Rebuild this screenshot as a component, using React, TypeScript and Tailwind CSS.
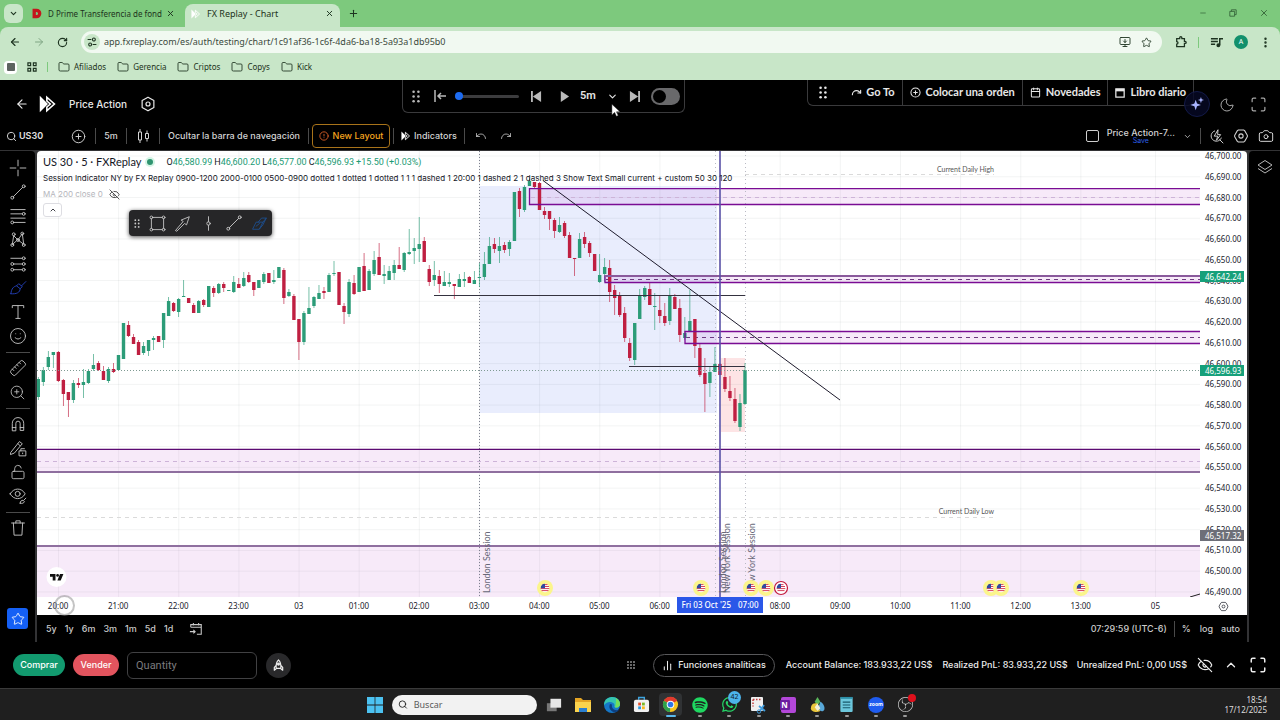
import React, { useState } from 'react';
import {
  ArrowLeft,
  ArrowRight,
  BarChart2,
  Calendar,
  ChevronDown,
  ChevronUp,
  CirclePlus,
  EyeOff,
  Folder,
  LockOpen,
  Maximize,
  Minus,
  Moon,
  Plus,
  Redo,
  RotateCw,
  Ruler,
  Search,
  Smile,
  Star,
  Trash2,
  Undo,
  X,
  ZoomIn,
  Camera,
  MonitorDown,
  EllipsisVertical,
  CircleAlert,
} from 'lucide-react';
import { FaSpotify, FaWhatsapp } from 'react-icons/fa';
import { SiObsstudio } from 'react-icons/si';

// x of the first candle and the distance between two candles
const FIRST_X = 38.3;
const STEP = 5.012;

// [up ? 1 : 0, high, bodyTop, bodyBottom, low]
const candles: number[][] = [
  [1, 377, 379, 397, 400], [1, 367, 370, 382, 386], [1, 351, 357, 367, 370], [1, 352, 352, 355, 368],
  [0, 351, 352, 381, 382], [0, 379, 380, 394, 406], [0, 392, 392, 400, 417], [1, 380, 383, 400, 403],
  [0, 378, 383, 385, 388], [1, 369, 382, 385, 398], [1, 369, 371, 383, 384], [1, 354, 365, 369, 371],
  [0, 361, 363, 370, 371], [0, 366, 371, 380, 380], [1, 367, 369, 381, 383], [0, 363, 369, 372, 373],
  [1, 355, 355, 370, 370], [1, 323, 323, 359, 359], [0, 321, 325, 336, 337], [0, 334, 337, 344, 344],
  [0, 340, 342, 355, 355], [1, 342, 346, 353, 355], [1, 340, 340, 351, 356], [1, 336, 338, 340, 350],
  [0, 336, 336, 342, 342], [1, 313, 313, 340, 348], [1, 297, 301, 316, 316], [0, 302, 303, 311, 312],
  [1, 298, 299, 312, 317], [1, 280, 296, 297, 297], [0, 298, 298, 303, 303], [0, 303, 305, 313, 313],
  [1, 300, 301, 313, 313], [0, 299, 300, 305, 307], [1, 286, 286, 307, 307], [0, 286, 288, 293, 297],
  [1, 283, 284, 293, 294], [0, 282, 284, 288, 292], [1, 290, 290, 291, 291], [1, 276, 282, 292, 293],
  [0, 278, 284, 288, 288], [1, 272, 278, 286, 287], [0, 272, 275, 282, 283], [0, 282, 282, 290, 296],
  [1, 280, 280, 288, 288], [1, 272, 274, 282, 284], [0, 273, 273, 283, 283], [1, 270, 280, 282, 284],
  [1, 267, 267, 278, 278], [0, 268, 270, 298, 304], [1, 289, 292, 296, 297], [0, 294, 296, 320, 320],
  [0, 319, 319, 342, 360], [1, 311, 313, 342, 345], [1, 287, 308, 314, 314], [1, 296, 297, 306, 308],
  [1, 285, 293, 299, 299], [0, 287, 291, 293, 299], [1, 273, 275, 292, 292], [1, 261, 273, 274, 276],
  [0, 272, 272, 305, 305], [0, 303, 306, 312, 324], [1, 279, 282, 314, 317], [0, 275, 283, 294, 295],
  [1, 267, 267, 292, 292], [0, 253, 266, 291, 291], [1, 269, 271, 290, 290], [1, 251, 260, 274, 276],
  [0, 243, 257, 275, 275], [1, 265, 274, 276, 284], [1, 266, 271, 280, 280], [1, 260, 265, 273, 280],
  [0, 247, 265, 269, 269], [1, 252, 253, 270, 272], [1, 229, 252, 254, 255], [1, 238, 248, 251, 264],
  [1, 217, 244, 249, 262], [0, 237, 241, 262, 262], [0, 265, 269, 282, 286], [1, 261, 275, 280, 286],
  [0, 270, 276, 284, 293], [1, 271, 282, 286, 286], [1, 273, 282, 284, 287], [0, 284, 284, 286, 299],
  [1, 274, 279, 287, 287], [1, 272, 279, 281, 287], [0, 276, 277, 283, 283], [1, 271, 280, 284, 284],
  [1, 263, 277, 278, 287], [1, 252, 264, 277, 280], [1, 237, 246, 264, 264], [0, 238, 244, 249, 253],
  [1, 237, 246, 251, 263], [0, 242, 245, 250, 253], [1, 240, 242, 249, 256], [1, 192, 192, 241, 241],
  [0, 188, 191, 209, 217], [1, 185, 187, 210, 212], [1, 178, 181, 186, 186], [0, 182, 182, 187, 189],
  [0, 182, 183, 210, 210], [0, 207, 211, 215, 219], [0, 211, 211, 219, 230], [0, 218, 220, 231, 238],
  [1, 217, 225, 232, 233], [0, 221, 223, 236, 238], [0, 232, 235, 258, 258], [0, 258, 258, 259, 276],
  [1, 233, 239, 258, 258], [0, 232, 237, 244, 248], [0, 241, 243, 253, 257], [0, 254, 254, 271, 271],
  [1, 254, 275, 282, 283], [1, 258, 267, 274, 282], [0, 260, 268, 292, 302], [0, 285, 290, 298, 315],
  [0, 292, 296, 315, 317], [0, 307, 313, 338, 342], [0, 338, 343, 358, 361], [1, 323, 323, 360, 365],
  [1, 289, 296, 319, 319], [1, 286, 288, 297, 300], [0, 282, 289, 305, 305], [1, 293, 306, 307, 330],
  [0, 296, 310, 316, 323], [0, 303, 316, 323, 326], [1, 288, 296, 321, 325], [0, 294, 297, 309, 309],
  [0, 299, 308, 335, 342], [1, 317, 333, 338, 340], [1, 290, 321, 332, 332], [0, 319, 319, 346, 358],
  [0, 344, 348, 375, 377], [0, 358, 373, 384, 412], [1, 367, 372, 383, 397], [1, 347, 364, 372, 372],
  [0, 363, 364, 375, 375], [0, 358, 377, 389, 392], [0, 376, 391, 398, 401], [0, 388, 399, 421, 423],
  [1, 394, 403, 427, 431], [1, 363, 370, 404, 405],
];

// the slot of 07:00 is covered by the crosshair label
const hours = [
  '20:00', '21:00', '22:00', '23:00', '03', '01:00', '02:00', '03:00', '04:00',
  '05:00', '06:00', '', '08:00', '09:00', '10:00', '11:00', '12:00', '13:00',
];

const prices = Array.from({ length: 22 }, (_, i) => 46700 - i * 10);

const flags = [545, 701, 751, 766, 781, 991, 1001, 1081];

const formatPrice = (n: number) => n.toLocaleString('en-US', { minimumFractionDigits: 2 });

const Flag = ({ x, ring }: { x: number; ring?: boolean }) => (
  <g transform={`translate(${x} 588)`}>
    {ring ? (
      <circle r="6.5" fill="#fff" stroke="#c2183c" strokeWidth="1.2" />
    ) : (
      <circle r="8" fill="#fbf58c" />
    )}
    <circle r="4.3" fill="#fff" />
    <path d="M-4 -1.5H4M-4.3 0.6H4.3M-3.5 2.6H3.5M-2.5 -3.4H2.5" stroke="#d8415a" strokeWidth="1" />
    <path d="M0 -4.3A4.3 4.3 0 0 0 -4.3 0.3H0Z" fill="#2f4ba0" />
  </g>
);

const Chart = () => (
  <svg
    viewBox="37 151 1163 446"
    preserveAspectRatio="xMinYMin slice"
    className="block h-full w-full"
    fontFamily="Lato, sans-serif"
  >
    <rect x="480" y="186" width="237" height="227" fill="#e9edfd" />
    <rect x="721" y="358" width="24" height="74" fill="#fde4e5" />
    <g stroke="#1c2030" strokeOpacity="0.05">
      {prices.map((p, i) => (
        <path key={p} d={`M37 ${156 + i * 20.76}H1200`} />
      ))}
      {hours.map((h, i) => (
        <path key={i} d={`M${58.5 + i * 60.14} 151V597`} />
      ))}
      <path d="M1155.5 151V597" />
    </g>

    {/* supply and demand zones */}
    <g fill="#b02fc8" fillOpacity="0.1">
      <rect x="529.5" y="189" width="672" height="16" />
      <rect x="605" y="276" width="596" height="7" />
      <rect x="685" y="331" width="516" height="13" />
      <rect x="37" y="449" width="1163" height="23" />
      <rect x="37" y="546" width="1163" height="51" />
    </g>
    <g stroke="#cdb4d8" strokeDasharray="4 4">
      <path d="M531 197.5H1200M37 461.5H1200" />
      <path d="M745 174.5H994M37 517.5H994" stroke="#dadada" />
    </g>
    <path d="M606 279.5H1200M686 337.5H1200" stroke="#6d3a80" strokeDasharray="4 4" />
    <path d="M479.5 151V597" stroke="#7d8090" strokeDasharray="1 2" />
    <path d="M715.5 151V597M745.5 151V597" stroke="#b9bac4" strokeDasharray="1 3" />

    {candles.map(([up, high, top, bottom, low], i) => {
      const x = FIRST_X + i * STEP;
      const color = up ? '#2c9c78' : '#bf1f41';
      return (
        <g key={i} fill={color}>
          <rect x={x - 0.4} y={high} width="0.8" height={low - high} opacity="0.8" />
          <rect x={x - 1.7} y={top} width="3.4" height={bottom - top} />
        </g>
      );
    })}

    <g fill="none" stroke="#7a0c94" strokeWidth="1.3">
      <path d="M1200 188.7H529.5V204.5H1200" />
      <path d="M1200 276H605V282.5H1200" />
      <path d="M1200 331.5H685V343.5H1200" />
    </g>
    <path d="M605 276H1200" stroke="#8a5a9c" strokeWidth="2" />
    <path d="M37 449.3H1200" stroke="#5b0a72" strokeWidth="1.3" />
    <path d="M37 472H1200M37 546H1200" stroke="#8f6f9f" strokeWidth="1.8" />
    <path d="M434 295.5H745M629 366.5H745" stroke="#34323f" />
    <path d="M543 180.5L840 400" stroke="#1d1a2c" />
    <path d="M37 370.5H1200" stroke="#7f9a92" strokeDasharray="1 2" />
    <path d="M720 151V597" stroke="#5a52a8" strokeWidth="1.6" />
    <path d="M1190 597L1200 594" stroke="#222" />

    <g fontSize="7" fill="#555" textAnchor="end">
      <text x="994" y="172">Current Daily High</text>
      <text x="994" y="514">Current Daily Low</text>
    </g>
    <g fontSize="9" fill="#676878">
      <text transform="translate(490 593) rotate(-90)">London Session</text>
      <text transform="translate(726 593) rotate(-90)">London Session</text>
      <text transform="translate(730 593) rotate(-90)">New York Session</text>
      <text transform="translate(755 593) rotate(-90)">New York Session</text>
    </g>
    {flags.map((x) => (
      <Flag key={x} x={x} ring={x === 781} />
    ))}
    <circle cx="56.5" cy="577" r="10" fill="#fff" />
    <path d="M50 574h5.5v6.5h-2.8v-3.8H50zM60 574h3.4l-2.7 6.5h-3.3z" fill="#111" />
    <circle cx="57.6" cy="575.4" r="1.4" fill="#111" />
  </svg>
);

const Glyph = ({ children, className = 'size-[20px]' }: { children: React.ReactNode; className?: string }) => (
  <svg
    viewBox="0 0 28 28"
    className={className}
    fill="none"
    stroke="currentColor"
    strokeWidth="1.3"
    strokeLinecap="round"
    strokeLinejoin="round"
  >
    {children}
  </svg>
);

const TrendGlyph = () => (
  <Glyph>
    <path d="M7.5 20.5L20.5 7.5" />
    <circle cx="6" cy="22" r="2" />
    <circle cx="22" cy="6" r="2" />
  </Glyph>
);

const Hexagon = ({ className }: { className: string }) => (
  <svg viewBox="0 0 24 24" className={className} fill="none" stroke="currentColor" strokeWidth="1.6">
    <path d="M8 3h8l1.5 1 4 7v2l-4 7-1.5 1H8l-1.5-1-4-7v-2l4-7z" />
    <circle cx="12" cy="12" r="3.2" />
  </svg>
);

const HexagonUp = ({ className }: { className: string }) => (
  <svg viewBox="0 0 24 24" className={className} fill="none" stroke="currentColor" strokeWidth="1.8" strokeLinejoin="round">
    <path d="M12 1.8l8.8 5v10.4l-8.8 5-8.8-5V6.8z" />
    <circle cx="12" cy="12" r="3" />
  </svg>
);

const FxLogo = ({ className }: { className: string }) => (
  <svg viewBox="0 0 24 24" className={className}>
    <path d="M1 1l11 11L1 23z" fill="currentColor" />
    <path d="M10.5 3L20.500 12l-10 9v-5L15 12l-4.500-4z" fill="none" stroke="currentColor" strokeWidth="2.200" />
  </svg>
);

const Dots = ({ className, cols = 2 }: { className: string; cols?: number }) => (
  <svg viewBox={cols === 2 ? '0 0 10 16' : '0 0 16 16'} className={className} fill="currentColor">
    {[2, 8, 14].map((y) =>
      [2, 8, 14].slice(0, cols).map((x) => <circle key={`${x}-${y}`} cx={x} cy={y} r="1.6" />)
    )}
  </svg>
);

const Divider = () => <span className="h-4 w-px shrink-0 bg-[#4a4a4a]" />;

const drawTools: { label: string; icon: React.ReactNode; active?: boolean }[][] = [
  [
    { label: 'Cross', icon: <Glyph><path d="M14 3v8M14 17v8M3 14h8M17 14h8" /></Glyph> },
    { label: 'Trend line', icon: <TrendGlyph /> },
    {
      label: 'Fib retracement',
      icon: (
        <Glyph>
          <path d="M4 5h20M4 11h16M4 17h20M8 23h16" />
          <circle cx="22" cy="11" r="2" />
          <circle cx="6" cy="23" r="2" />
        </Glyph>
      ),
    },
    {
      label: 'Patterns',
      icon: (
        <Glyph>
          <path d="M6 20L8 8L14 14L20 5L22 20L14 14Z" />
          <circle cx="6" cy="21" r="2" />
          <circle cx="8" cy="6" r="2" />
          <circle cx="14" cy="14" r="2" />
          <circle cx="20" cy="5" r="2" />
          <circle cx="22" cy="21" r="2" />
        </Glyph>
      ),
    },
    {
      label: 'Forecast',
      icon: (
        <Glyph>
          <path d="M4 6h16M8 14h12M8 22h12" />
          <circle cx="22" cy="6" r="2" />
          <circle cx="6" cy="14" r="2" />
          <circle cx="22" cy="14" r="2" />
          <circle cx="6" cy="22" r="2" />
          <circle cx="22" cy="22" r="2" />
        </Glyph>
      ),
    },
    {
      label: 'Brush',
      active: true,
      icon: (
        <Glyph>
          <path d="M4 22c1-8 4-10 8-11l5 4c0 5-5 8-13 7zM12 11l3-3 5 4-3 3M19 11l6-6" />
        </Glyph>
      ),
    },
    { label: 'Text', icon: <Glyph><path d="M6 8V5h16v3M14 5v18M11 23h6" /></Glyph> },
    { label: 'Emoji', icon: <Smile size={18} strokeWidth={1.2} /> },
  ],
  [
    { label: 'Measure', icon: <Ruler size={18} strokeWidth={1.2} className="scale-x-[-1]" /> },
    { label: 'Zoom in', icon: <ZoomIn size={17} strokeWidth={1.2} /> },
  ],
  [
    {
      label: 'Magnet',
      icon: (
        <Glyph>
          <path d="M6 23V13a8 8 0 0 1 16 0v10h-5V13a3 3 0 0 0-6 0v10zM6 19h5M17 19h5" />
        </Glyph>
      ),
    },
    {
      label: 'Keep drawing',
      icon: (
        <Glyph>
          <path d="M4 20L16 5l4 3L9 21l-5 2zM14 8l3 3M16 18h9v7h-9zM18 18v-3h5" />
          <path d="M20.5 21v1" />
        </Glyph>
      ),
    },
    { label: 'Lock drawings', icon: <LockOpen size={16} strokeWidth={1.3} /> },
    {
      label: 'Hide drawings',
      icon: (
        <Glyph>
          <path d="M3 11c5-9 16-9 21 0-5 9-16 9-21 0z" />
          <circle cx="13.5" cy="11" r="3.5" />
          <path d="M17 24c0-3 2-4 4-4l2 2c-1 2-3 3-6 2zM22 20l3-3" />
        </Glyph>
      ),
    },
  ],
  [
    {
      label: 'Remove',
      icon: <Glyph><path d="M5 7h18M11 7V4h6v3M7.500 7l1 17h11l1-17" /></Glyph>,
    },
  ],
];

const BrowserBar = () => (
  <header className="bg-[#7dc97d] font-['Noto_Sans',sans-serif] text-[#1d3320]">
    <div className="flex h-[27px] items-end text-[9px]">
      <button aria-label="Search tabs" className="mb-[4px] ml-1 flex size-[19px] items-center justify-center rounded-md bg-[#c8e6c8]">
        <ChevronDown size={9} strokeWidth={3} />
      </button>
      <div className="flex h-[27px] w-[162px] items-center pr-[10px] pl-2 font-['Liberation_Sans',sans-serif]">
        <svg viewBox="0 0 12 12" className="mr-[6px] size-[11px] shrink-0">
          <path d="M3.5 2.5h2.5a3.5 3.5 0 0 1 0 7H3.5z" fill="none" stroke="#c4161c" strokeWidth="3.600" />
        </svg>
        <span className="font-['Noto_Sans',sans-serif] text-[8px] whitespace-nowrap">D Prime Transferencia de fond</span>
        <X size={9} strokeWidth={2.5} className="ml-auto shrink-0" />
      </div>
      <div className="flex h-[23px] w-[155px] items-center rounded-t-lg bg-[#c8e6c8] px-[6px] pb-1">
        <FxLogo className="mr-[6px] size-[10px] text-white" />
        <span>FX Replay - Chart</span>
        <X size={9} strokeWidth={2.5} className="ml-auto" />
      </div>
      <Plus size={11} strokeWidth={2.2} className="mb-2 ml-2" />
      <div className="mb-[9px] ml-auto flex items-center gap-[22px] pr-[11px] text-[#2f5a33]">
        <Minus size={8} strokeWidth={2} />
        <svg viewBox="0 0 10 10" className="size-[8px]" fill="none" stroke="currentColor">
          <path d="M1 3h6v6H1zM3 3V1h6v6H7" />
        </svg>
        <X size={10} strokeWidth={2} />
      </div>
    </div>
    <div className="rounded-t-lg bg-[#c8e6c8]">
      <div className="flex h-[30px] items-center pl-[9px]">
        <ArrowLeft size={12} strokeWidth={2.3} />
        <ArrowRight size={12} strokeWidth={2} className="ml-3 text-[#7fa583]" />
        <RotateCw size={11} strokeWidth={2.5} className="mr-[13px] ml-3" />
        <div className="flex h-[22px] flex-1 items-center rounded-full bg-[#f1f9f1] px-[3px]">
          <span className="mr-1 flex size-[16px] items-center justify-center rounded-full bg-[#c8e6c8]">
            <svg viewBox="0 0 16 16" className="size-[10px]" fill="none" stroke="currentColor" strokeWidth="1.700">
              <path d="M1 4h6M9 12h6" />
              <circle cx="11" cy="4" r="2.300" />
              <circle cx="5" cy="12" r="2.300" />
            </svg>
          </span>
          <input
            aria-label="Address"
            defaultValue="app.fxreplay.com/es/auth/testing/chart/1c91af36-1c6f-4da6-ba18-5a93a1db95b0"
            className="flex-1 bg-transparent text-[9px] text-[#3b4a3d] outline-none"
          />
          <MonitorDown size={12} strokeWidth={1.8} />
          <Star size={11} strokeWidth={1.8} className="mr-[7px] ml-[10px]" />
        </div>
        <svg viewBox="0 0 14 14" className="ml-[13px] size-3" fill="none" stroke="currentColor" strokeWidth="1.500">
          <path d="M2 3h3.500V2a1.200 1.200 0 0 1 2.500 0v1H11v3.200h.800a1.200 1.200 0 0 1 0 2.500H11V12.500H2V9.500a1.500 1.500 0 0 0 0-3z" />
        </svg>
        <span className="mx-[11px] h-[11px] w-px bg-[#7dc97d]" />
        <svg viewBox="0 0 14 14" className="size-[13px]" fill="none" stroke="currentColor" strokeWidth="1.600">
          <path d="M1 3h7.500M1 6h7.500M1 9h4.500M10.500 10V3H14" />
          <circle cx="9" cy="10" r="1.300" fill="currentColor" />
        </svg>
        <span className="ml-[11px] flex size-[14px] items-center justify-center rounded-full bg-[#12906c] text-[7px] text-white">A</span>
        <EllipsisVertical size={13} strokeWidth={2.5} className="mr-2 ml-[11px]" />
      </div>
      <nav className="flex h-[23px] items-center pb-[3px] pl-1 text-[8px]">
        <span className="flex size-[13px] items-center justify-center rounded-sm bg-white">
          <span className="size-[8px] rounded-[1px] bg-[#5d6360]" />
        </span>
        <svg viewBox="0 0 11 11" className="ml-[10px] size-[10px]" fill="none" stroke="currentColor" strokeWidth="1.300">
          <path d="M1 1h3v3H1zM7 1h3v3H7zM1 7h3v3H1zM7 7h3v3H7z" />
        </svg>
        <span className="mr-[10px] ml-[10px] h-[10px] w-px bg-[#7dc97d]" />
        <div className="flex gap-[11px]">
          {['Afiliados', 'Gerencia', 'Criptos', 'Copys', 'Kick'].map((name) => (
            <a key={name} href="#" className="flex items-center gap-1">
              <Folder size={12} strokeWidth={1.7} />
              {name}
            </a>
          ))}
        </div>
      </nav>
    </div>
  </header>
);

const Replay = () => {
  const [auto, setAuto] = useState(false);
  return (
    <div className="flex h-[33px] w-[283px] shrink-0 items-center self-start rounded-b-md border border-t-0 border-[#3a3a3c] pl-[9px] text-[#b9b9b9]">
      <Dots className="h-[13px] w-[8px]" />
      <svg viewBox="0 0 12 12" className="ml-[14px] size-3" fill="none" stroke="currentColor" strokeWidth="1.500">
        <path d="M1 0v12M12 6H4M7 3L4 6l3 3" />
      </svg>
      <input
        type="range"
        aria-label="Replay position"
        defaultValue={0}
        className="ml-[9px] h-[3px] w-[64px] appearance-none rounded-full bg-[#3c3c3e] [&::-webkit-slider-thumb]:size-[8px] [&::-webkit-slider-thumb]:appearance-none [&::-webkit-slider-thumb]:rounded-full [&::-webkit-slider-thumb]:bg-[#1d6bf0]"
      />
      <button aria-label="Step back" className="ml-3">
        <svg viewBox="0 0 12 12" className="size-[11px]" fill="currentColor"><path d="M0 0h2v12H0zM11 0v12L2 6z" /></svg>
      </button>
      <button aria-label="Play" className="ml-[17px]">
        <svg viewBox="0 0 12 12" className="size-[11px]" fill="currentColor"><path d="M2 0l9 6-9 6z" /></svg>
      </button>
      <button className="ml-[10px] flex items-center gap-[11px] font-['Roboto',sans-serif] text-[11px] font-semibold text-[#e4e4e4]">
        5m
        <ChevronDown size={11} strokeWidth={2.5} />
      </button>
      <button aria-label="Step forward" className="ml-[11px]">
        <svg viewBox="0 0 12 12" className="size-[11px]" fill="currentColor"><path d="M10 0h2v12h-2zM1 0v12l9-6z" /></svg>
      </button>
      <input
        type="checkbox"
        aria-label="Auto"
        checked={auto}
        onChange={() => setAuto(!auto)}
        className="ml-[11px] h-[17px] w-[29px] appearance-none rounded-full bg-[#69696b] p-[2px] before:block before:size-[13px] before:rounded-full before:bg-black checked:before:translate-x-3"
      />
    </div>
  );
};

const AppHeader = () => (
  <div className="flex h-[43px] items-center text-[11px] font-medium text-[#e8e8e8]">
    <div className="flex w-[402px] shrink-0 items-center pt-[5px] pl-[15px]">
      <a href="#" aria-label="Back"><ArrowLeft size={14} strokeWidth={2} /></a>
      <FxLogo className="ml-[10px] size-[18px] text-white" />
      <span className="ml-3 font-['Inter',sans-serif] text-[10px]">Price Action</span>
      <button aria-label="Settings" className="ml-[13px]"><HexagonUp className="size-[16px]" /></button>
    </div>
    <Replay />
    <div className="ml-auto flex h-[26px] items-stretch self-start rounded-b-md border border-t-0 border-[#3a3a3c] font-['Lato',sans-serif] font-bold">
      <span className="flex items-center pr-[9px] pl-[11px]"><Dots className="h-[13px] w-[8px]" /></span>
      <button className="flex items-center gap-1 pr-[7px] pl-[15px]"><Redo size={11} strokeWidth={2.5} />Go To</button>
      <button className="flex items-center gap-[5px] border-l border-[#3a3a3c] px-[7px]"><CirclePlus size={11} strokeWidth={2.2} />Colocar una orden</button>
      <button className="flex items-center gap-[5px] border-l border-[#3a3a3c] px-[7px]"><Calendar size={11} strokeWidth={2.2} />Novedades</button>
      <button className="flex items-center gap-[5px] border-l border-[#3a3a3c] px-[7px]">
        <svg viewBox="0 0 12 12" className="size-[10px]" fill="none" stroke="currentColor" strokeWidth="1.500">
          <path d="M1 1h10v10H1z" />
          <path d="M1 2.500h10" strokeWidth="3" />
        </svg>
        Libro diario
      </button>
    </div>
    <button aria-label="Assistant" className="-ml-[10px] mt-[5px] flex size-[26px] items-center justify-center rounded-full border border-[#131a48] bg-[#060926]/80">
      <svg viewBox="0 0 16 16" className="size-[14px]" fill="#a9b4ff">
        <path d="M6.500 3l1.500 4.500L12.500 9 8 10.500 6.500 15 5 10.500.500 9 5 7.500zM12.500 0l.900 2.600L16 3.500l-2.600.900L12.500 7l-.900-2.600L9 3.500l2.600-.900z" />
      </svg>
    </button>
    <Moon size={16} strokeWidth={1.5} className="mt-[6px] ml-[9px] text-[#a8a8a8]" />
    <Maximize size={17} strokeWidth={1.7} className="mt-[6px] mr-[13px] ml-[15px] text-[#a8a8a8]" />
  </div>
);

const Toolbar = () => (
  <div className="flex h-[27px] items-center pb-px font-['Inter',sans-serif] text-[9px] font-medium text-[#d4d4d4]">
    <button className="flex w-[71px] items-center gap-[2px] pl-[6px] font-semibold text-[#e2e2e2]"><Search size={11} strokeWidth={2} />US30</button>
    <button aria-label="Compare" className="mr-[9px]"><CirclePlus size={15} strokeWidth={1.5} /></button>
    <Divider />
    <button className="w-[30px]">5m</button>
    <Divider />
    <button aria-label="Candles" className="mx-[10px]">
      <svg viewBox="0 0 12 14" className="h-[14px] w-3" fill="none" stroke="currentColor">
        <path d="M1.500 3h3v8h-3zM3 0v3M3 11v3M8.500 4.500h3v5h-3zM10 1.500v3M10 9.500v3" />
      </svg>
    </button>
    <Divider />
    <button className="ml-[8px] mr-[8px] whitespace-nowrap">Ocultar la barra de navegación</button>
    <Divider />
    <button className="mx-[3px] flex h-6 w-[78px] items-center justify-center gap-1 whitespace-nowrap rounded border border-[#a8731a] text-[#f5a51f]">
      <CircleAlert size={10} strokeWidth={2} className="text-[#e8662a]" />New Layout
    </button>
    <Divider />
    <button className="mx-[7px] flex items-center gap-[3px]"><FxLogo className="size-[10px] text-white" />Indicators</button>
    <Divider />
    <Undo size={12} strokeWidth={1.5} className="ml-[10px]" />
    <Redo size={12} strokeWidth={1.5} className="ml-[13px]" />
    <span className="ml-auto h-[12px] w-[13px] rounded-[2px] border border-[#cfcfcf]" />
    <div className="ml-[8px] text-center leading-[9px]">
      Price Action-7...
      <div className="text-[7px] leading-[7px] font-normal text-[#2c5fe8]">Save</div>
    </div>
    <ChevronDown size={9} strokeWidth={2} className="mx-2" />
    <Divider />
    <svg viewBox="0 0 20 20" className="ml-2 size-[15px]" fill="none" stroke="currentColor" strokeWidth="1.300">
      <path d="M8 2.500a7 7 0 1 0 8.500 9M14 14l5 5M12 1L7 9.500h4.500L10 15l5.500-7.500H11.500z" />
    </svg>
    <Hexagon className="ml-[9px] size-[16px]" />
    <Camera size={16} strokeWidth={1.5} className="mr-[6px] ml-[9px]" />
  </div>
);

const Sidebar = () => (
  <aside className="flex w-[35px] shrink-0 flex-col items-center rounded-tr bg-black pt-[5px] text-[#c4c4c4]">
    {drawTools.map((group, g) => (
      <React.Fragment key={g}>
        {g > 0 && <span className="mt-[4px] mb-[3px] h-px w-6 shrink-0 bg-[#4a4a4a]" />}
        {group.map((tool) => (
          <button
            key={tool.label}
            aria-label={tool.label}
            className={`flex h-6 w-[35px] items-center justify-center ${tool.active ? 'text-[#2440b8]' : ''}`}
          >
            {tool.icon}
          </button>
        ))}
      </React.Fragment>
    ))}
    <button aria-label="Favorites" className="mt-auto mb-[13px] flex size-[21px] items-center justify-center rounded-[3px] bg-[#1560f5] text-white">
      <Star size={14} strokeWidth={1.5} />
    </button>
  </aside>
);

const Legend = () => (
  <div className="absolute top-1 left-[6px] text-[#14161f]">
    <div className="flex h-[14px] items-center whitespace-nowrap">
      <span className="font-['Lato',sans-serif] text-[11px]">US 30 · 5 · FXReplay</span>
      <span className="mr-[11px] ml-1 flex size-[10px] items-center justify-center rounded-full bg-[#d5f5e6]">
        <span className="size-[6px] rounded-full bg-[#2f9470]" />
      </span>
      <div className="flex gap-[2px] pt-px font-['Roboto',sans-serif] text-[9px] text-[#209a74]">
        {[['O', '46,580.99'], ['H', '46,600.20'], ['L', '46,577.00'], ['C', '46,596.93']].map(([k, v]) => (
          <span key={k}><span className="text-[#14161f]">{k}</span>{v}</span>
        ))}
        <span>+15.50 (+0.03%)</span>
      </div>
    </div>
    <p className="mt-[2px] font-['Inter',sans-serif] text-[8px] leading-[14px] whitespace-nowrap">
      Session Indicator NY by FX Replay 0900-1200 2000-0100 0500-0900 dotted 1 dotted 1 dotted 1 1 1 dashed 1 20:00 1 dashed 2 1 dashed 3 Show Text Small current + custom 50 30 120
    </p>
    <p className="mt-[2px] flex items-center gap-[6px] font-['Inter',sans-serif] text-[8px] leading-[14px] text-[#b4b5bb]">
      MA 200 close 0 <EyeOff size={11} strokeWidth={1.8} className="text-[#333]" />
    </p>
    <button aria-label="Collapse legend" className="mt-[2px] flex h-[14px] w-[19px] items-center justify-center rounded-[3px] border border-[#dddde2] bg-white">
      <ChevronUp size={8} strokeWidth={2.5} />
    </button>
  </div>
);

const FloatingTools = () => (
  <div className="absolute top-[59px] left-[92px] flex h-[26px] w-[143px] items-center justify-between rounded bg-[#262628] pr-[3px] pl-[5px] text-[#c9c9c9] shadow-[0_1px_4px_rgba(0,0,0,0.7)]">
    <Dots className="mr-[2px] h-[9px] w-[6px]" />
    <Glyph className="size-[19px]">
      <path d="M7 5h14M7 23h14M5 7v14M23 7v14" />
      <circle cx="5" cy="5" r="2" /><circle cx="23" cy="5" r="2" />
      <circle cx="5" cy="23" r="2" /><circle cx="23" cy="23" r="2" />
    </Glyph>
    <Glyph className="size-[19px]"><path d="M4 24L15 11l-3-2 12-5-4 12-3-2L6 25z" /></Glyph>
    <Glyph className="size-[19px]"><path d="M14 4v7.500M14 16.500v7.500" /><circle cx="14" cy="14" r="2.500" /></Glyph>
    <TrendGlyph />
    <span className="text-[#1d4f8f]">
      <Glyph className="size-[19px]"><path d="M4 22L9 12h10l-5 10zM12 12L17 6h7l-5 6M14 22l5-6 5-10M9 18l5-4" /></Glyph>
    </span>
  </div>
);

const ChartPanel = () => (
  <section className="flex min-w-0 flex-1 flex-col rounded-t bg-white font-['Noto_Sans',sans-serif]">
    <div className="flex min-h-0 flex-1">
      <div className="relative min-w-0 flex-1">
        <div className="absolute inset-0"><Chart /></div>
        <Legend />
        <FloatingTools />
      </div>
      <div className="relative flex w-[47px] shrink-0 flex-col justify-between overflow-hidden pl-[5px] text-[8px] leading-[10px] text-[#20222c]">
        {prices.map((p) => (
          <span key={p}>{formatPrice(p)}</span>
        ))}
        <span className="absolute top-[120px] left-0 h-[11px] w-11 bg-[#16a07a] pl-[5px] leading-[11px] text-white">46,642.24</span>
        <span className="absolute top-[214px] left-0 h-[11px] w-11 bg-[#16a07a] pl-[5px] leading-[11px] text-white">46,596.93</span>
        <span className="absolute top-[379px] left-0 h-[11px] w-11 bg-[#6d6f78] pl-[5px] leading-[11px] text-white">46,517.32</span>
      </div>
    </div>
    <div className="relative flex h-[18px] items-center text-[8px] text-[#20222c]">
      <div className="-ml-[9px] flex min-w-0 flex-1 text-center">
        {hours.map((h, i) => (
          <span key={i} className="flex-[60_1_0%]">{h}</span>
        ))}
        <span className="flex-[89_1_0%]">05</span>
      </div>
      <span className="flex w-[47px] justify-center"><Hexagon className="size-[11px]" /></span>
      <span className="absolute top-0 left-[640px] flex h-4 w-[86px] items-center justify-center gap-[7px] whitespace-nowrap bg-[#2a57e8] font-medium text-white">
        <span>Fri 03 Oct '25</span>
        <span>07:00</span>
      </span>
      <span className="absolute -top-[2px] left-[17px] size-[21px] rounded-full border-2 border-[#8a8a8a]/50" />
    </div>
  </section>
);

const RangeBar = () => (
  <div className="flex h-[27px] items-center bg-black pl-[5px] font-['Inter',sans-serif] text-[9px] font-medium text-[#cacaca]">
    {['5y', '1y', '6m', '3m', '1m', '5d', '1d'].map((r) => (
      <button key={r} className="px-[4px]">{r}</button>
    ))}
    <span className="ml-[3px]"><Divider /></span>
    <svg viewBox="0 0 16 16" className="ml-[9px] size-[14px]" fill="none" stroke="currentColor" strokeWidth="1.200">
      <path d="M2 6V3h12v11H9M2 6h12M5 1v3M11 1v3M1 11h6M5 9l2 2-2 2" />
    </svg>
    <span className="mr-[7px] ml-auto">07:29:59 (UTC-6)</span>
    <Divider />
    <button className="ml-[7px]">%</button>
    <button className="ml-[9px]">log</button>
    <button className="mr-[7px] ml-2">auto</button>
  </div>
);

const OrderBar = () => (
  <div className="flex h-[46px] items-center pl-[13px] font-['Inter',sans-serif] text-[9px] font-medium text-[#ededed]">
    <button className="h-[22px] w-[52px] rounded-full bg-[#129a6f] text-white">Comprar</button>
    <button className="ml-2 h-[22px] w-[46px] rounded-full bg-[#e2545e] text-white">Vender</button>
    <input
      aria-label="Quantity"
      placeholder="Quantity"
      className="ml-2 h-[27px] w-[130px] rounded-md border border-[#414143] bg-transparent px-[8px] font-['Roboto',sans-serif] text-[11px] font-normal placeholder:text-[#7b7b7e]"
    />
    <button aria-label="Quick order" className="ml-[9px] flex size-[25px] items-center justify-center rounded-full bg-[#29292b]">
      <svg viewBox="0 0 14 14" className="size-[13px]" fill="none" stroke="currentColor" strokeWidth="1.300" strokeLinejoin="round">
        <path d="M7 1C4.500 3 4.200 5.500 4.500 10h5C9.800 5.500 9.500 3 7 1zM4.400 7L2.500 9V12L4.500 10.500M9.600 7L11.500 9V12L9.500 10.500" />
        <circle cx="7" cy="5.500" r="1" fill="currentColor" />
      </svg>
    </button>
    <Dots cols={3} className="ml-auto size-[8px]" />
    <button className="ml-[18px] flex h-[23px] items-center gap-[5px] whitespace-nowrap rounded-full border border-[#58585a] px-[8px]">
      <BarChart2 size={11} strokeWidth={2.2} />Funciones analíticas
    </button>
    <span className="ml-[11px] whitespace-nowrap">Account Balance: 183.933,22 US$</span>
    <span className="ml-[10px] whitespace-nowrap">Realized PnL: 83.933,22 US$</span>
    <span className="ml-[9px] whitespace-nowrap">Unrealized PnL: 0,00 US$</span>
    <EyeOff size={16} strokeWidth={1.8} className="ml-[10px] shrink-0" />
    <ChevronUp size={14} strokeWidth={2.2} className="ml-[11px] shrink-0" />
    <Maximize size={18} strokeWidth={2} className="mr-[13px] ml-[11px] shrink-0" />
  </div>
);

const apps: { name: string; icon: React.ReactNode; open?: boolean }[] = [
  {
    name: 'Task view',
    icon: <svg viewBox="0 0 18 18" className="size-4"><path d="M1 7h11v9H1z" fill="#777" /><path d="M5 2h12v10H5z" fill="#e6e6e6" /></svg>,
  },
  {
    name: 'Explorer',
    icon: (
      <svg viewBox="0 0 18 18" className="size-[18px]">
        <path d="M1 2h6l2 2h8v12H1z" fill="#e5a524" />
        <path d="M1 6h16v10H1z" fill="#fbd34d" />
        <path d="M5 12h8v4H5z" fill="#2b7fd0" />
      </svg>
    ),
  },
  {
    name: 'Edge',
    icon: (
      <svg viewBox="0 0 18 18" className="size-[18px]">
        <circle cx="9" cy="9" r="8" fill="#1677c8" />
        <path d="M1 9C1 3 6 1 9.500 1 14 1 17 4 17 8c0 3-3 4-5 3.500-1-.500-.500-1.500-.500-2.500C11.500 6 5 4 1 9z" fill="#35c5b0" />
        <path d="M13 2.200C16 4 17 6 17 8c0 3-3 4-5 3.500 1-3 1-6 1-9.300z" fill="#74dd5a" />
        <path d="M7 8c-2 4 1 8 5 8.300 2-.300 3-1.300 4-2.600-4 1.500-8-1-7-5.200z" fill="#0d3f80" />
      </svg>
    ),
  },
  {
    name: 'Store',
    icon: (
      <svg viewBox="0 0 18 18" className="size-[17px]">
        <path d="M6 4V1.500h6V4" fill="none" stroke="#3da4e0" strokeWidth="1.500" />
        <rect x="1" y="4" width="16" height="13" rx="2" fill="#f2f2f2" />
        <path d="M5.500 7H8.500v3h-3z" fill="#e5502b" /><path d="M9.500 7h3v3h-3z" fill="#7bb928" />
        <path d="M5.500 11h3v3h-3z" fill="#2a9be0" /><path d="M9.500 11h3v3h-3z" fill="#f8b820" />
      </svg>
    ),
  },
  {
    name: 'Chrome',
    icon: (
      <svg viewBox="0 0 18 18" className="size-[17px]">
        <circle cx="9" cy="9" r="8" fill="#f9c51c" />
        <path d="M9 9L2 5A8 8 0 0 1 16 5z" fill="#e23a2e" />
        <path d="M9 9L2 5A8 8 0 0 0 8.500 17z" fill="#2da14c" />
        <circle cx="9" cy="9" r="4" fill="#fff" />
        <circle cx="9" cy="9" r="3" fill="#2f77e5" />
      </svg>
    ),
  },
  { name: 'Spotify', open: true, icon: <FaSpotify size={16} color="#1ed760" /> },
  {
    name: 'WhatsApp',
    open: true,
    icon: (
      <span className="relative">
        <FaWhatsapp size={17} color="#25d366" />
        <span className="absolute -top-[5px] left-[7px] flex size-[13px] items-center justify-center rounded-full bg-[#4cb3ea] text-[7px] text-[#10202c]">42</span>
      </span>
    ),
  },
  {
    name: 'Snipping',
    open: true,
    icon: (
      <svg viewBox="0 0 18 18" className="size-[18px]">
        <rect x="1" y="1" width="12" height="14" rx="1" fill="#efefef" />
        <path d="M3 3.500h8M3 3.500v7" stroke="#c23b3b" strokeDasharray="1.500 1.500" strokeWidth="1.500" />
        <path d="M9 10l6 5M10 15l4-6" stroke="#3e9bdc" strokeWidth="1.800" />
        <circle cx="9" cy="15.500" r="1.700" fill="none" stroke="#3e9bdc" />
      </svg>
    ),
  },
  {
    name: 'OneNote',
    open: true,
    icon: (
      <span className="relative flex h-4 w-[15px] items-center rounded-[2px] bg-[#b347d9]">
        <span className="-ml-[1px] flex size-[10px] items-center justify-center rounded-[1px] bg-[#6b1fa0] text-[8px] font-bold text-white">N</span>
      </span>
    ),
  },
  {
    name: 'MetaTrader',
    open: true,
    icon: (
      <svg viewBox="0 0 18 18" className="size-[17px]">
        <path d="M9 1l3 5-3 4-3-4z" fill="#5cb85c" />
        <path d="M2 13c0-4 3-6 7-5l3 8c-4 2-10 1-10-3z" fill="#e9c63b" />
        <path d="M12 6c4 2 6 8 3 10-2 1-5-1-5-4z" fill="#58a8d8" />
        <path d="M6 12l3-4 3 5-3 3z" fill="#f3efd8" />
      </svg>
    ),
  },
  {
    name: 'Notepad',
    open: true,
    icon: (
      <svg viewBox="0 0 18 18" className="size-[17px]">
        <rect x="2.500" y="1" width="13" height="16" rx="1" fill="#6cc7dc" />
        <path d="M2.500 2h13" stroke="#2c8fa8" strokeWidth="2" />
        <path d="M5 6.500h8M5 9.500h8M5 12.500h8" stroke="#17596b" strokeWidth="1.200" />
      </svg>
    ),
  },
  {
    name: 'Zoom',
    open: true,
    icon: <span className="flex size-4 items-center justify-center rounded-full bg-[#1f5cf0] text-[5px] font-bold text-white">zoom</span>,
  },
  {
    name: 'OBS',
    open: true,
    icon: (
      <span className="relative">
        <SiObsstudio size={15} color="#cfcfcf" />
        <span className="absolute -top-[3px] -right-[3px] size-[8px] rounded-full bg-[#e0101c]" />
      </span>
    ),
  },
];

const Taskbar = () => (
  <footer className="grid h-8 grid-cols-[1fr_auto_1fr] items-center border-t border-[#3a3a3a] bg-[#1f1f1f] font-['Noto_Sans',sans-serif]">
    <span />
    <div className="flex items-center">
      <button aria-label="Start" className="mr-2 ml-[3px]">
        <svg viewBox="0 0 18 18" className="size-[18px]" fill="#4cc2f1">
          <path d="M1 1h7.600v7.600H1zM9.400 1H17v7.600H9.400zM1 9.400h7.600V17H1zM9.400 9.400H17V17H9.400z" />
        </svg>
      </button>
      <label className="flex h-5 w-[145px] items-center gap-[6px] rounded-full bg-[#f2f2f2] px-[6px] text-[#1f1f1f]">
        <Search size={11} strokeWidth={2.2} />
        <input type="text" aria-label="Buscar" placeholder="Buscar" className="w-full bg-transparent text-[9px] outline-none placeholder:text-[#5b5b5b]" />
      </label>
      <div className="ml-[5px] flex w-[375px] justify-between">
        {apps.map((app) => (
          <button
            key={app.name}
            aria-label={app.name}
            className={`relative flex size-[23px] items-center justify-center rounded ${app.name === 'Chrome' ? 'bg-[#303234]' : ''}`}
          >
            {app.icon}
            {app.open && <span className="absolute -bottom-[1px] h-[2px] w-1 rounded-full bg-[#9a9a9a]" />}
            {app.name === 'Chrome' && <span className="absolute -bottom-[1px] h-[2px] w-[10px] rounded-full bg-[#5ab9ee]" />}
          </button>
        ))}
      </div>
    </div>
    <div className="pr-[13px] text-right text-[8px] leading-[10px] text-[#dcdcdc]">
      <div>18:54</div>
      <div>17/12/2025</div>
    </div>
  </footer>
);

const App: React.FC = () => {
  return (
    <div className="relative flex min-h-screen flex-col bg-black font-['Lato',sans-serif]">
      <BrowserBar />
      <AppHeader />
      <Toolbar />
      <main className="flex flex-1 gap-[2px] border-t border-[#333335] bg-[#333335]">
        <Sidebar />
        <div className="flex min-w-0 flex-1 flex-col">
          <ChartPanel />
          <RangeBar />
        </div>
        <aside className="flex w-[31px] shrink-0 justify-center rounded-tl bg-black pt-2 text-[#b5b5b5]">
          <svg viewBox="0 0 16 16" className="size-[16px]" fill="none" stroke="currentColor" strokeLinejoin="round">
            <path d="M8 1.500L15 6 8 10.500 1 6zM1 9.500L8 14l7-4.500" />
          </svg>
        </aside>
      </main>
      <OrderBar />
      <Taskbar />
      {/* mouse pointer */}
      <svg viewBox="0 0 10 14" className="absolute top-[104px] left-[611px] h-[13px] w-[9px]">
        <path d="M1 0v12l3-3 2 4.500 2-1L6 8.500h4z" fill="#fff" stroke="#222" strokeWidth="0.500" />
      </svg>
    </div>
  );
};

export default App;
